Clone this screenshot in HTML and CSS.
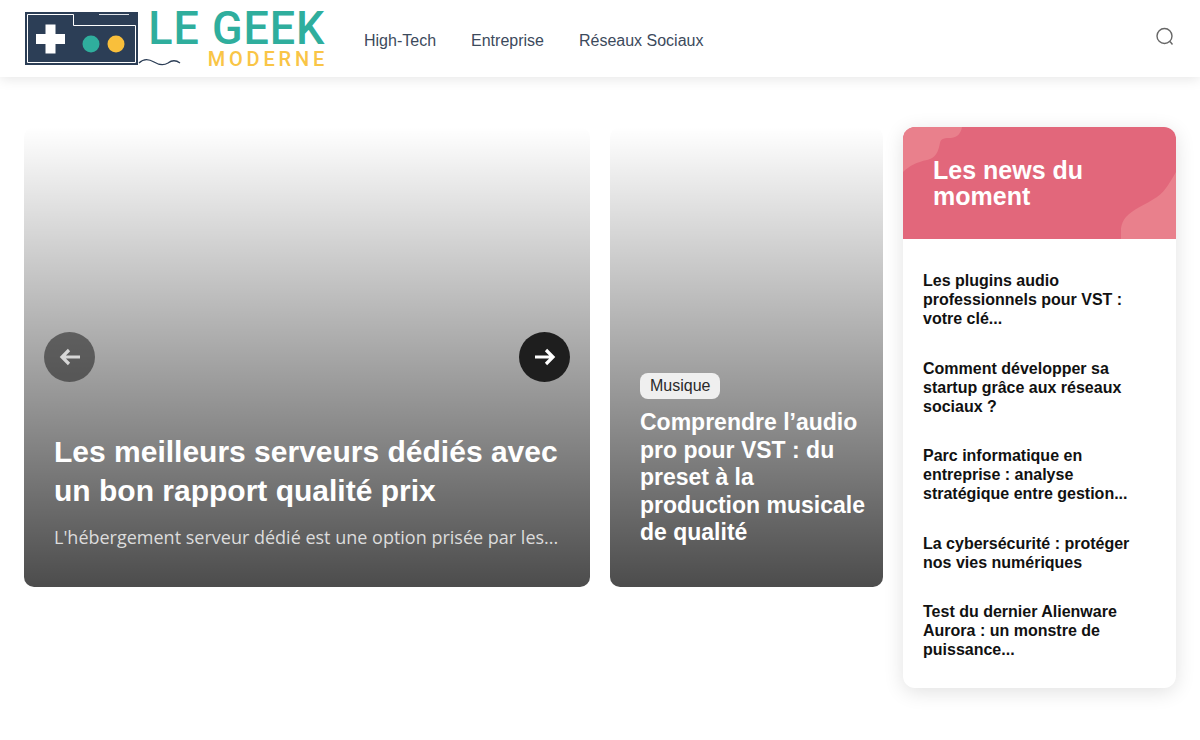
FILE: index.html
```html
<!DOCTYPE html>
<html lang="fr">
<head>
<meta charset="utf-8">
<title>Le Geek Moderne</title>
<link rel="stylesheet" href="styles.css">
</head>
<body>
<header class="site-header">
  <a class="logo" href="#">
    <svg class="logo-pad" width="160" height="58" viewBox="0 0 160 58" aria-hidden="true">
      <path d="M1 1H114V54H1Z" fill="#2c3e56"/>
      <path d="M3.500 3.500H49.500V14.500H111.500V51.500H3.500V3.500" fill="none" stroke="#fff" stroke-width="1"/>
      <path d="M75 3.500H105" stroke="#dfe3e8" stroke-width="1"/>
      <path d="M12 23H21.500V13.500H31.500V23H41V33H31.500V42.500H21.500V33H12Z" fill="#fff"/>
      <circle cx="67" cy="33" r="8.500" fill="#2fae9d"/>
      <circle cx="92" cy="33" r="8.500" fill="#f9bf3b"/>
      <path d="M115 52C120 47 125 48 130 51C135 54 139 55 144 52C148 49 152 49 156 52" fill="none" stroke="#2c3e56" stroke-width="1.300"/>
    </svg>
    <span class="logo-text">
      <span class="logo-main">LE GEEK</span>
      <span class="logo-sub">MODERNE</span>
    </span>
  </a>
  <nav class="nav">
    <a href="#">High-Tech</a>
    <a href="#">Entreprise</a>
    <a href="#">Réseaux Sociaux</a>
  </nav>
  <button class="search" aria-label="Rechercher">
    <svg width="20" height="20" viewBox="0 0 20 20"><circle cx="9.500" cy="9" r="7.500" fill="none" stroke="#666" stroke-width="1.400"/><path d="M15 14.500L17.500 17.500" stroke="#666" stroke-width="1.400"/></svg>
  </button>
</header>

<main class="layout">
  <article class="card card-wide">
    <h2 class="wide-title">Les meilleurs serveurs dédiés avec un bon rapport qualité prix</h2>
    <p class="excerpt">L'hébergement serveur dédié est une option prisée par les...</p>
    <span class="arrow arrow-prev">
      <svg width="22" height="18" viewBox="0 0 22 18"><path d="M21 9H3M10 2L3 9L10 16" fill="none" stroke="#fff" stroke-width="3.200"/></svg>
    </span>
    <span class="arrow arrow-next">
      <svg width="22" height="18" viewBox="0 0 22 18"><path d="M1 9H19M12 2L19 9L12 16" fill="none" stroke="#fff" stroke-width="3.200"/></svg>
    </span>
  </article>

  <article class="card card-narrow">
    <span class="tag">Musique</span>
    <h2 class="narrow-title">Comprendre l’audio pro pour VST : du preset à la production musicale de qualité</h2>
  </article>

  <aside class="news">
    <div class="news-head">
      <svg class="blob blob-top" width="60" height="45" viewBox="0 0 60 45"><path d="M0 45C6 39 14 35 24 33C35 31 36 20 37 16C38 11 42 11 48 11C55 10 58 6 59 0H10C4 0 0 4 0 10Z" fill="#e9808c"/></svg>
      <svg class="blob blob-bottom" width="55" height="67" viewBox="0 0 55 67"><path d="M55 0V67H0C-1 58 0 51 5 45C12 37 24 33 36 25C45 19 50 8 55 0Z" fill="#e9808c"/></svg>
      <h2 class="news-title">Les news du moment</h2>
    </div>
    <ul class="news-list">
      <li>Les plugins audio professionnels pour VST : votre clé...</li>
      <li>Comment développer sa startup grâce aux réseaux sociaux ?</li>
      <li>Parc informatique en entreprise : analyse stratégique entre gestion...</li>
      <li>La cybersécurité : protéger nos vies numériques</li>
      <li>Test du dernier Alienware Aurora : un monstre de puissance...</li>
    </ul>
  </aside>
</main>
</body>
</html>
```
FILE: styles.css
```css
* { box-sizing: border-box; }
html, body { margin: 0; padding: 0; }
body {
  background: #fff;
  font-family: "Liberation Sans", Arial, sans-serif;
  height: 740px;
  overflow: hidden;
}
a { color: inherit; text-decoration: none; }

.site-header {
  height: 77px;
  display: flex;
  align-items: center;
  padding: 0 24px;
  background: #fff;
  box-shadow: 0 2px 12px rgba(0, 0, 0, .1);
}
.logo {
  display: flex;
  align-items: flex-start;
  width: 340px;
  height: 77px;
  padding: 9px 0 0 0;
}
.logo-pad { margin-top: 2px; flex: none; width: 160px; margin-right: -36px; }
.logo-text {
  display: flex;
  flex-direction: column;
  align-items: flex-end;
  width: 176px;
  margin-left: 1px;
}
.logo-main {
  font-family: Roboto, sans-serif;
  font-weight: 500;
  font-size: 47px;
  line-height: 40px;
  letter-spacing: 1px;
  color: #2fae9d;
  white-space: nowrap;
  margin-top: -1px;
  transform: scaleX(.955);
  transform-origin: right center;
}
.logo-sub {
  font-family: Roboto, sans-serif;
  font-size: 20px;
  font-weight: 500;
  line-height: 20px;
  letter-spacing: 3.800px;
  color: #f9c546;
  margin-right: -3px;
  margin-top: 1px;
}
.nav {
  display: flex;
  gap: 35px;
  font-size: 16px;
  color: #3c4a5c;
  padding-top: 5px;
}
.search {
  margin-left: auto;
  margin-right: 1px;
  margin-top: -4px;
  padding: 0;
  border: 0;
  background: none;
  display: flex;
}

.layout {
  display: grid;
  grid-template-columns: 566px 273px 273px;
  gap: 20px;
  align-items: start;
  padding: 50px 24px 0;
}
.card {
  position: relative;
  height: 460px;
  border-radius: 10px;
  overflow: hidden;
  padding: 0 30px;
  display: flex;
  flex-direction: column;
  justify-content: flex-end;
  background: linear-gradient(rgba(0, 0, 0, 0), rgba(0, 0, 0, .7));
  color: #fff;
}
.card-wide { padding-bottom: 37px; }
.wide-title {
  margin: 0 0 14px;
  font-size: 30px;
  line-height: 39px;
  font-weight: 700;
}
.excerpt {
  margin: 0;
  font-family: "Open Sans", sans-serif;
  font-size: 18px;
  line-height: 26px;
  color: #dcdcdc;
  white-space: nowrap;
}
.arrow {
  position: absolute;
  top: 205px;
  width: 51px;
  height: 50px;
  border-radius: 50%;
  display: flex;
  align-items: center;
  justify-content: center;
  background: #1e1e1e;
}
.arrow-prev { left: 20px; opacity: .55; }
.arrow-next { right: 20px; }

.card-narrow { padding: 0 16px 40px 30px; }
.tag {
  align-self: flex-start;
  background: #efefef;
  color: #2a2a2a;
  font-size: 16px;
  line-height: 26px;
  padding: 0 10px;
  border-radius: 8px;
  margin-bottom: 10px;
}
.narrow-title {
  margin: 0;
  font-size: 23px;
  line-height: 27.600px;
  font-weight: 700;
}

.news {
  border-radius: 12px;
  overflow: hidden;
  background: #fff;
  box-shadow: 0 4px 20px rgba(0, 0, 0, .12);
}
.news-head {
  position: relative;
  height: 112px;
  background: #e2677b;
  padding: 30px 30px 0;
}
.blob { position: absolute; display: block; }
.blob-top { left: 0; top: 0; }
.blob-bottom { right: 0; bottom: 0; }
.news-title {
  position: relative;
  margin: 0;
  color: #fff;
  font-size: 25px;
  line-height: 26px;
  font-weight: 700;
}
.news-list {
  list-style: none;
  margin: 0;
  padding: 32px 20px 29px;
  display: flex;
  flex-direction: column;
  gap: 30.500px;
  color: #111;
  font-size: 16px;
  line-height: 19px;
  font-weight: 700;
}
```
